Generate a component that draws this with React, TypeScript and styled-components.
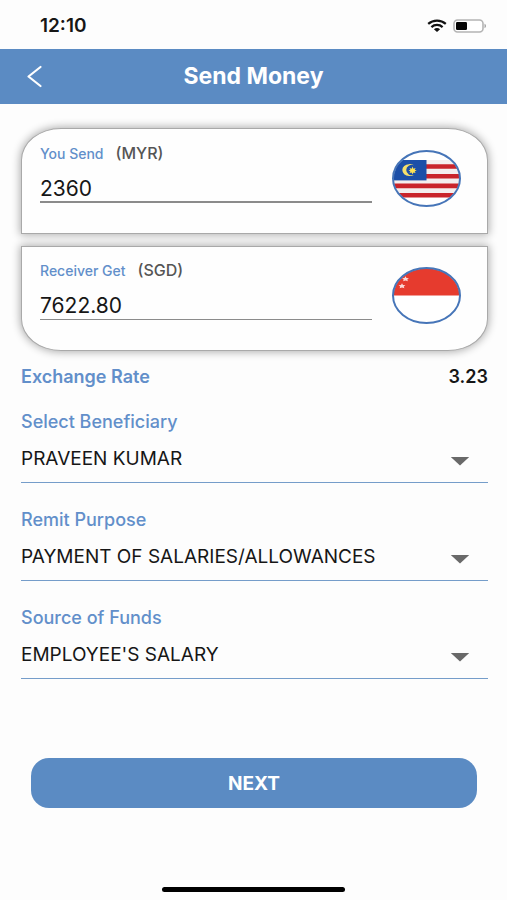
import React, { useId, useState } from "react";
import styled, { createGlobalStyle } from "styled-components";

const BLUE = "#5b8bc3";
const LABEL_BLUE = "#628fca";

const GlobalStyle = createGlobalStyle`
  * { box-sizing: border-box; }
  body {
    margin: 0;
    background: #fdfdfd;
    color: #161616;
    font-family: Inter, "Liberation Sans", sans-serif;
    font-optical-sizing: none;
  }
  input, select, button { font-family: inherit; font-optical-sizing: inherit; }
`;

const Screen = styled.div`
  display: flex;
  flex-direction: column;
  min-height: 100vh;
`;

const StatusBar = styled.div`
  display: flex;
  align-items: center;
  justify-content: space-between;
  height: 49px;
  padding: 3px 20px 0 40px;
`;

const Clock = styled.time`
  font-size: 19px;
  font-weight: 600;
  line-height: 20px;
`;

const StatusIcons = styled.div`
  display: flex;
  align-items: center;
  gap: 6px;

  svg { display: block; }
`;

const Header = styled.header`
  display: grid;
  grid-template-columns: 48px 1fr 48px;
  align-items: center;
  height: 55px;
  padding: 0 10px 2px;
  background: ${BLUE};
  color: #fff;
`;

const BackButton = styled.button`
  display: flex;
  align-items: center;
  justify-content: center;
  height: 48px;
  padding: 0;
  border: 0;
  background: none;
  color: inherit;
  cursor: pointer;
`;

const Title = styled.h1`
  margin: 0;
  font-size: 23px;
  font-weight: 700;
  line-height: 28px;
  text-align: center;
`;

const Form = styled.form`
  display: flex;
  flex: 1;
  flex-direction: column;
  padding: 24px 19px 0 21px;
`;

const Amounts = styled.div`
  display: flex;
  flex-direction: column;
  gap: 12px;
`;

const AmountCard = styled.section<{ $edge: "top" | "bottom" }>`
  display: grid;
  grid-template-columns: 1fr 69px;
  align-items: start;
  gap: 20px;
  padding: ${(p) => (p.$edge === "top" ? "14px 26px 26px 18px" : "13px 26px 26px 18px")};
  border: 1px solid #a9a9a9;
  border-radius: ${(p) =>
    p.$edge === "top" ? "40px 40px 0 0 / 32px 32px 0 0" : "0 0 40px 40px / 0 0 32px 32px"};
  background: #fefefe;
  box-shadow: 0 0 8px 1px rgba(0, 0, 0, 0.32);

  > svg { display: block; margin-top: 7px; }
`;

const AmountBody = styled.div`
  display: flex;
  flex-direction: column;
  gap: 10px;
  min-width: 0;
`;

const AmountHeading = styled.div`
  display: flex;
  align-items: baseline;
  gap: 12px;
  height: 20px;
  line-height: 20px;
`;

const AmountLabel = styled.label`
  color: ${LABEL_BLUE};
  font-size: 14px;
  font-weight: 500;
`;

const Currency = styled.span`
  color: #555;
  font-size: 16px;
  font-weight: 500;
`;

const AmountInput = styled.input<{ $rule: number }>`
  width: 100%;
  height: 30px;
  padding: 2px 0 0;
  border: 0;
  border-bottom: ${(p) => p.$rule}px solid #8b8b8b;
  border-radius: 0;
  outline: 0;
  background: none;
  color: #161616;
  font-size: 21px;
`;

const Rate = styled.div`
  display: flex;
  justify-content: space-between;
  margin: 16px 0 25px;
  font-size: 18px;
  font-weight: 600;
  line-height: 20px;
`;

const RateLabel = styled.span`
  color: ${LABEL_BLUE};
`;

const Fields = styled.div`
  display: flex;
  flex-direction: column;
  gap: 27px;
`;

const Field = styled.div`
  display: flex;
  flex-direction: column;
`;

const FieldLabel = styled.label`
  color: ${LABEL_BLUE};
  font-size: 18px;
  font-weight: 500;
  line-height: 20px;
`;

const SelectBox = styled.div`
  position: relative;
  border-bottom: 1px solid #759dca;

  svg {
    position: absolute;
    top: 50%;
    right: 18px;
    pointer-events: none;
  }
`;

const Select = styled.select`
  display: block;
  width: 100%;
  height: 50px;
  padding: 2px 48px 0 0;
  border: 0;
  outline: 0;
  appearance: none;
  background: none;
  color: #161616;
  font-size: 19px;
`;

const NextButton = styled.button`
  height: 50px;
  margin: 79px 11px 0 10px;
  border: 0;
  border-radius: 18px;
  background: ${BLUE};
  color: #fff;
  font-size: 19px;
  font-weight: 700;
  cursor: pointer;
`;

const HomeIndicator = styled.div`
  align-self: center;
  width: 36%;
  height: 5px;
  margin: auto 0 8px;
  border-radius: 3px;
  background: #000;
`;

function WifiIcon() {
  return (
    <svg width="20" height="14" viewBox="0 0 20 14" aria-hidden="true">
      <g fill="none" stroke="#111" strokeWidth="2.2">
        <path d="M1.2 4.9C6.2.4 13.8.4 18.8 4.9" />
        <path d="M4.4 8.1c3.2-2.9 8-2.9 11.2 0" />
      </g>
      <path d="M6.9 10.2c1.8-1.5 4.4-1.5 6.2 0L10 13Z" fill="#111" />
    </svg>
  );
}

function BatteryIcon() {
  return (
    <svg width="34" height="14" viewBox="0 0 34 14" aria-hidden="true">
      <rect x="1" y="1" width="29" height="12" rx="3.5" fill="#fff" stroke="#b4b4b4" strokeWidth="1.6" />
      <rect x="3" y="3" width="11" height="8" rx="1.2" fill="#050505" />
      <path d="M31.5 4.8c2 .7 2 3.7 0 4.4Z" fill="#a5a5a5" />
    </svg>
  );
}

function BackIcon() {
  return (
    <svg width="18" height="24" viewBox="0 0 18 24" aria-hidden="true">
      <path d="M15.5 3 3.5 12.5l12 9.5" fill="none" stroke="#fff" strokeWidth="2.2" strokeLinecap="round" strokeLinejoin="round" />
    </svg>
  );
}

function ArrowIcon() {
  return (
    <svg width="20" height="10" viewBox="0 0 20 10" aria-hidden="true">
      <path d="M.8 0h18.4L10 8.5Z" fill="#696969" />
    </svg>
  );
}

function MalaysiaFlag() {
  const clip = useId();
  return (
    <svg width="69" height="57" viewBox="0 0 69 57" role="img" aria-label="Malaysia">
      <clipPath id={clip}>
        <ellipse cx="34.5" cy="28.5" rx="33" ry="27" />
      </clipPath>
      <g clipPath={`url(#${clip})`}>
        <rect width="69" height="57" fill="#fff" />
        <rect y="10" width="69" height="37" fill="#f4eeee" />
        <path d="M0 16.5h69M0 26.3h69M0 35.9h69M0 45.3h69" stroke="#c9242b" strokeWidth="4.6" />
        <rect y="10" width="34.5" height="20.4" fill="#1c4fa8" />
        <path d="M22 15.3A7.3 6 0 1 0 22 24.9A5.6 5.2 0 1 1 22 15.3Z" fill="#f5e06c" />
        <path d="m20.5 16.6.9 2.1 2.2-.8-.9 1.9 2 .7-2 .8.9 1.8-2.2-.7-.9 2.1-.8-2.1-2.2.7.9-1.8-1.9-.8 1.9-.7-.9-1.9 2.2.8Z" fill="#ffe353" />
      </g>
      <ellipse cx="34.5" cy="28.5" rx="33.5" ry="27.5" fill="none" stroke="#4675b8" strokeWidth="2" />
    </svg>
  );
}

function SingaporeFlag() {
  const clip = useId();
  return (
    <svg width="69" height="57" viewBox="0 0 69 57" role="img" aria-label="Singapore">
      <clipPath id={clip}>
        <ellipse cx="34.5" cy="28.5" rx="33" ry="27" />
      </clipPath>
      <g clipPath={`url(#${clip})`}>
        <rect width="69" height="57" fill="#fff" />
        <rect width="69" height="28.5" fill="#e63b2e" />
        <g fill="#fbd9d6">
          <path d="m13.5 9.3 1 1.7 2.4.2-1.6 1.3.6 1.7-2.4-.8-2.4.8.6-1.7-1.6-1.3 2.4-.2Z" />
          <path d="m10 16.3 1 1.7 2.4.2-1.6 1.3.6 1.7-2.4-.8-2.4.8.6-1.7-1.6-1.3 2.4-.2Z" />
        </g>
      </g>
      <ellipse cx="34.5" cy="28.5" rx="33.5" ry="27.5" fill="none" stroke="#4675b8" strokeWidth="2" />
    </svg>
  );
}

interface AmountProps {
  edge: "top" | "bottom";
  label: string;
  currency: string;
  initial: string;
  children: React.ReactNode;
}

function Amount({ edge, label, currency, initial, children }: AmountProps) {
  const id = useId();
  const [value, setValue] = useState(initial);
  return (
    <AmountCard $edge={edge}>
      <AmountBody>
        <AmountHeading>
          <AmountLabel htmlFor={id}>{label}</AmountLabel>
          <Currency>({currency})</Currency>
        </AmountHeading>
        <AmountInput
          id={id}
          $rule={edge === "top" ? 2 : 1}
          inputMode="decimal"
          value={value}
          onChange={(e) => setValue(e.target.value)}
        />
      </AmountBody>
      {children}
    </AmountCard>
  );
}

function SelectField({ label, option }: { label: string; option: string }) {
  const id = useId();
  return (
    <Field>
      <FieldLabel htmlFor={id}>{label}</FieldLabel>
      <SelectBox>
        <Select id={id} defaultValue={option}>
          <option value={option}>{option}</option>
        </Select>
        <ArrowIcon />
      </SelectBox>
    </Field>
  );
}

const fields = [
  { label: "Select Beneficiary", option: "PRAVEEN KUMAR" },
  { label: "Remit Purpose", option: "PAYMENT OF SALARIES/ALLOWANCES" },
  { label: "Source of Funds", option: "EMPLOYEE'S SALARY" },
];

export default function App() {
  return (
    <Screen>
      <GlobalStyle />
      <StatusBar>
        <Clock>12:10</Clock>
        <StatusIcons>
          <WifiIcon />
          <BatteryIcon />
        </StatusIcons>
      </StatusBar>
      <Header>
        <BackButton type="button" aria-label="Back">
          <BackIcon />
        </BackButton>
        <Title>Send Money</Title>
      </Header>
      <Form onSubmit={(e) => e.preventDefault()}>
        <Amounts>
          <Amount edge="top" label="You Send" currency="MYR" initial="2360">
            <MalaysiaFlag />
          </Amount>
          <Amount edge="bottom" label="Receiver Get" currency="SGD" initial="7622.80">
            <SingaporeFlag />
          </Amount>
        </Amounts>
        <Rate>
          <RateLabel>Exchange Rate</RateLabel>
          <span>3.23</span>
        </Rate>
        <Fields>
          {fields.map((f) => (
            <SelectField key={f.label} {...f} />
          ))}
        </Fields>
        <NextButton type="submit">NEXT</NextButton>
      </Form>
      <HomeIndicator />
    </Screen>
  );
}
